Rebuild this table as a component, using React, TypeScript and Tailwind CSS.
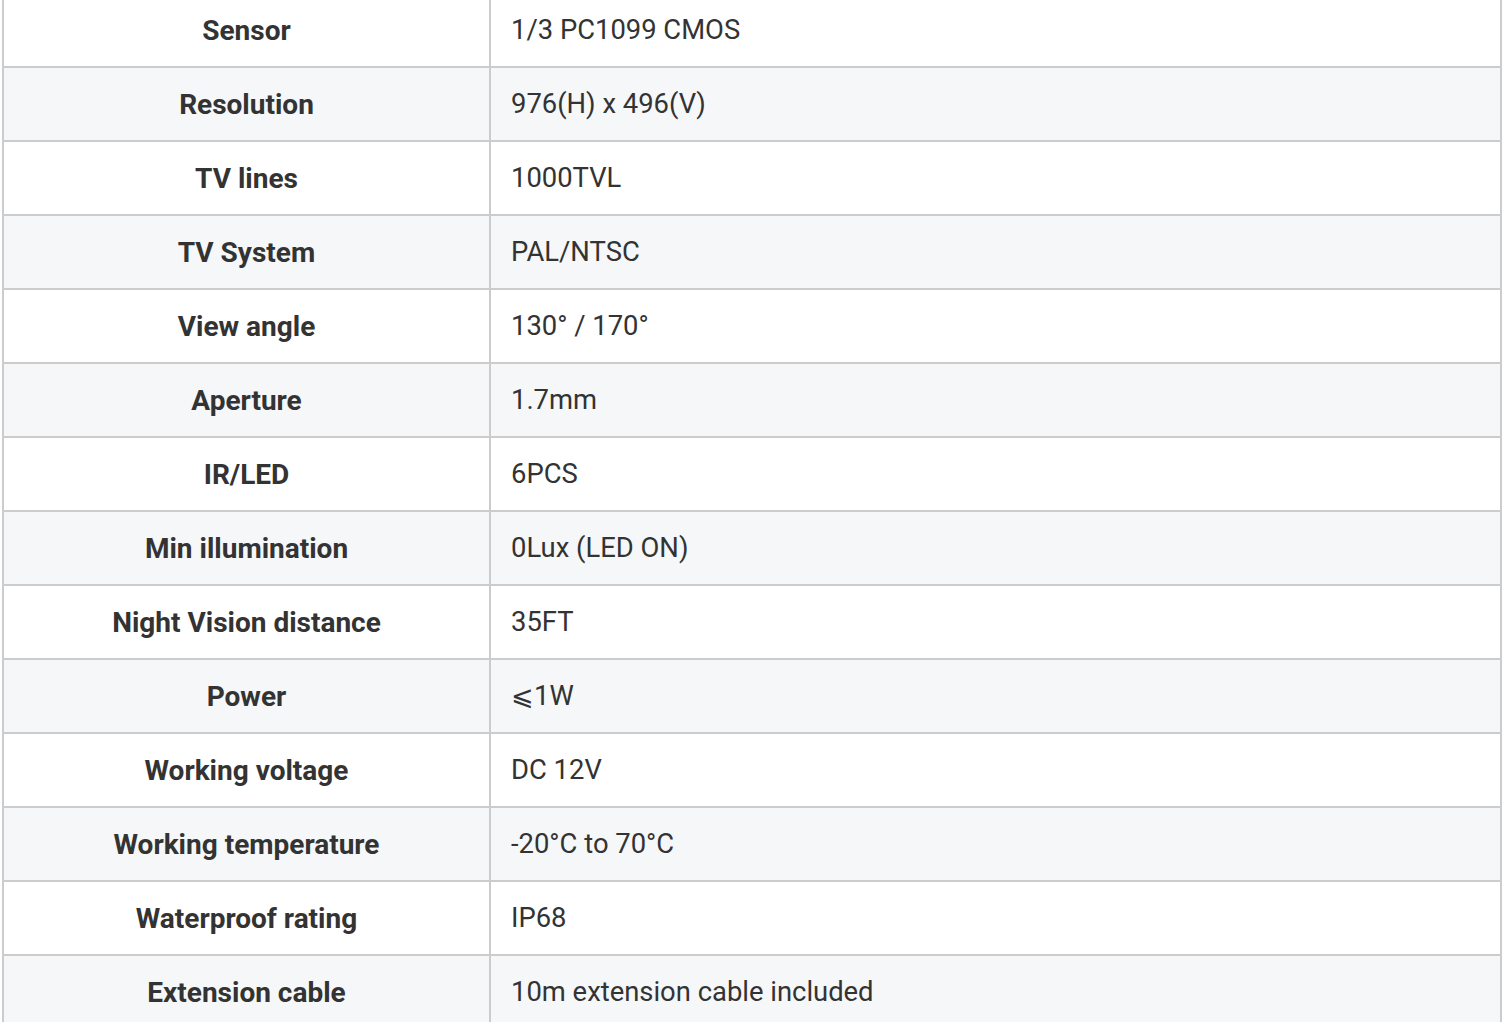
import React from "react";

const rows: [string, string][] = [
  ["Sensor", "1/3 PC1099 CMOS"],
  ["Resolution", "976(H) x 496(V)"],
  ["TV lines", "1000TVL"],
  ["TV System", "PAL/NTSC"],
  ["View angle", "130° / 170°"],
  ["Aperture", "1.7mm"],
  ["IR/LED", "6PCS"],
  ["Min illumination", "0Lux (LED ON)"],
  ["Night Vision distance", "35FT"],
  ["Power", "⩽1W"],
  ["Working voltage", "DC 12V"],
  ["Working temperature", "-20°C to 70°C"],
  ["Waterproof rating", "IP68"],
  ["Extension cable", "10m extension cable included"],
];

export default function App() {
  return (
    <div className="h-[1022px] overflow-hidden bg-white" style={{ fontFamily: "Roboto, 'Liberation Sans', sans-serif" }}>
      <table className="ml-[2px] -mt-[8px] w-[1500px] border-collapse border-2 border-[#cccccc] text-[27.4px] text-[#333333]">
        <tbody>
          {rows.map(([k, v], i) => (
            <tr key={k} className={i % 2 === 1 ? "bg-[#f6f7f9]" : "bg-white"}>
              <td className="h-[74px] w-[487px] border-2 border-[#cccccc] pt-[2px] text-center align-middle text-[28px] font-bold">{k}</td>
              <td className="h-[74px] border-2 border-[#cccccc] pl-[20px] pt-[2px] align-middle">{v}</td>
            </tr>
          ))}
        </tbody>
      </table>
    </div>
  );
}
